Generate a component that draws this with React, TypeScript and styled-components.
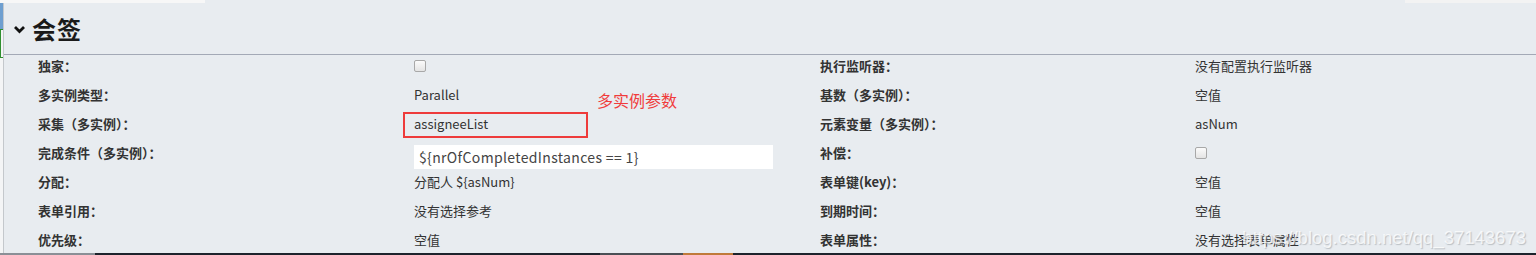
import React from "react";
import styled, { createGlobalStyle } from "styled-components";

const Global = createGlobalStyle`
  html, body { margin: 0; padding: 0; background: #e8ecf0; }
  body { font-family: "Noto Sans CJK SC", "Noto Sans", sans-serif; color: #333; }
`;

const Page = styled.div`
  position: relative;
  height: 255px;
  display: flex;
  flex-direction: column;
  overflow: hidden;
  background: #e8ecf0;
`;

const TopStrip = styled.div`
  height: 3px;
  display: grid;
  grid-template-columns: 205px 1fr 131px;
`;

const StripPart = styled.div<{ $c: string }>`
  background: ${(p) => p.$c};
`;

const Body = styled.div`
  flex: 1;
  display: flex;
  min-height: 0;
`;

const Gutter = styled.div`
  width: 3px;
  display: flex;
  flex-direction: column;
  border-right: 1px solid #c4c8cc;
  background: #f4f5f6;
`;

const GutterBlue = styled.div`
  height: 26px;
  background: #6e9fd0;
`;

const GutterGreen = styled.div`
  height: 27px;
  border: 1px solid #2f8f2f;
  border-right: none;
`;

const Main = styled.div`
  flex: 1;
  display: flex;
  flex-direction: column;
  min-height: 0;
`;

const Header = styled.div`
  height: 52px;
  display: flex;
  align-items: center;
  gap: 6px;
  padding-left: 9px;
  border-bottom: 1px solid #a3a9b6;
  box-sizing: border-box;
`;

const Title = styled.h2`
  margin: 0;
  font-size: 24px;
  font-weight: 700;
  color: #1a1a1a;
  line-height: 30px;
  letter-spacing: 1px;
`;

const Grid = styled.div`
  flex: 1;
  min-height: 0;
  overflow: hidden;
  padding-left: 34px;
  display: grid;
  grid-template-columns: 376px 406px 375px 1fr;
  grid-auto-rows: 29px;
`;

const Label = styled.div`
  font-size: 13px;
  font-weight: 700;
  line-height: 20px;
  padding-top: 1px;
  color: #333;
  white-space: nowrap;
`;

const Value = styled.div`
  position: relative;
  font-size: 13px;
  line-height: 20px;
  padding-top: 1px;
  color: #333;
  white-space: nowrap;
`;

const Check = styled.span`
  display: inline-block;
  width: 10px;
  height: 10px;
  margin-top: 4px;
  border: 1px solid #a8a8a8;
  border-radius: 2px;
  background: linear-gradient(#fbfbfb, #e4e4e4);
`;

const Input = styled.div`
  width: 359px;
  height: 24px;
  margin-top: 2px;
  background: #fff;
  font-size: 14px;
  letter-spacing: 0.35px;
  line-height: 24px;
  padding-left: 5px;
  box-sizing: border-box;
  color: #444;
`;

const Highlight = styled.div`
  position: absolute;
  left: -11px;
  top: -1px;
  width: 181px;
  height: 22px;
  border: 2px solid #ee3b3b;
`;

const Note = styled.div`
  position: absolute;
  left: 183px;
  top: -23px;
  font-size: 16px;
  line-height: 20px;
  color: #f03c3c;
`;

const Watermark = styled.div`
  position: absolute;
  right: 10px;
  bottom: 6px;
  font-family: "Liberation Sans", Arial, sans-serif;
  font-size: 18.5px;
  color: rgba(255, 255, 255, 0.75);
  text-shadow: 1px 1px 1px rgba(150, 155, 160, 0.55);
  pointer-events: none;
`;

const BottomBar = styled.div`
  height: 2px;
  display: grid;
  grid-template-columns: 95px 505px 83px 50px 48px 1fr;
`;

const Chevron = () => (
  <svg width="13" height="10" viewBox="0 0 13 10">
    <polyline points="2,3 6.5,7.5 11,3" fill="none" stroke="#111" strokeWidth="2.8" />
  </svg>
);

type Cell =
  | { kind: "text"; text: string }
  | { kind: "check" }
  | { kind: "input"; text: string }
  | { kind: "marked"; text: string; note: string };

const rows: [string, Cell, string, Cell][] = [
  ["独家：", { kind: "check" }, "执行监听器：", { kind: "text", text: "没有配置执行监听器" }],
  ["多实例类型：", { kind: "text", text: "Parallel" }, "基数（多实例）：", { kind: "text", text: "空值" }],
  ["采集（多实例）：", { kind: "marked", text: "assigneeList", note: "多实例参数" }, "元素变量（多实例）：", { kind: "text", text: "asNum" }],
  ["完成条件（多实例）：", { kind: "input", text: "${nrOfCompletedInstances == 1}" }, "补偿：", { kind: "check" }],
  ["分配：", { kind: "text", text: "分配人 ${asNum}" }, "表单键(key)：", { kind: "text", text: "空值" }],
  ["表单引用：", { kind: "text", text: "没有选择参考" }, "到期时间：", { kind: "text", text: "空值" }],
  ["优先级：", { kind: "text", text: "空值" }, "表单属性：", { kind: "text", text: "没有选择表单属性" }],
];

const renderCell = (c: Cell) => {
  switch (c.kind) {
    case "check":
      return (
        <Value>
          <Check />
        </Value>
      );
    case "input":
      return (
        <Value>
          <Input>{c.text}</Input>
        </Value>
      );
    case "marked":
      return (
        <Value>
          {c.text}
          <Highlight />
          <Note>{c.note}</Note>
        </Value>
      );
    default:
      return <Value>{c.text}</Value>;
  }
};

export default function App() {
  return (
    <>
      <Global />
      <Page>
        <TopStrip>
          <StripPart $c="#f7f7f7" />
          <StripPart $c="#e8ecf0" />
          <StripPart $c="#f3f3f3" />
        </TopStrip>
        <Body>
          <Gutter>
            <GutterBlue />
            <GutterGreen />
          </Gutter>
          <Main>
            <Header>
              <Chevron />
              <Title>会签</Title>
            </Header>
            <Grid>
              {rows.map(([l1, v1, l2, v2], i) => (
                <React.Fragment key={i}>
                  <Label>{l1}</Label>
                  {renderCell(v1)}
                  <Label>{l2}</Label>
                  {renderCell(v2)}
                </React.Fragment>
              ))}
            </Grid>
          </Main>
        </Body>
        <BottomBar>
          <StripPart $c="#8a8f96" />
          <StripPart $c="#1d232c" />
          <StripPart $c="#4a4f55" />
          <StripPart $c="#c07a3a" />
          <StripPart $c="#1d232c" />
          <StripPart $c="#1d232c" />
        </BottomBar>
        <Watermark>https://blog.csdn.net/qq_37143673</Watermark>
      </Page>
    </>
  );
}
